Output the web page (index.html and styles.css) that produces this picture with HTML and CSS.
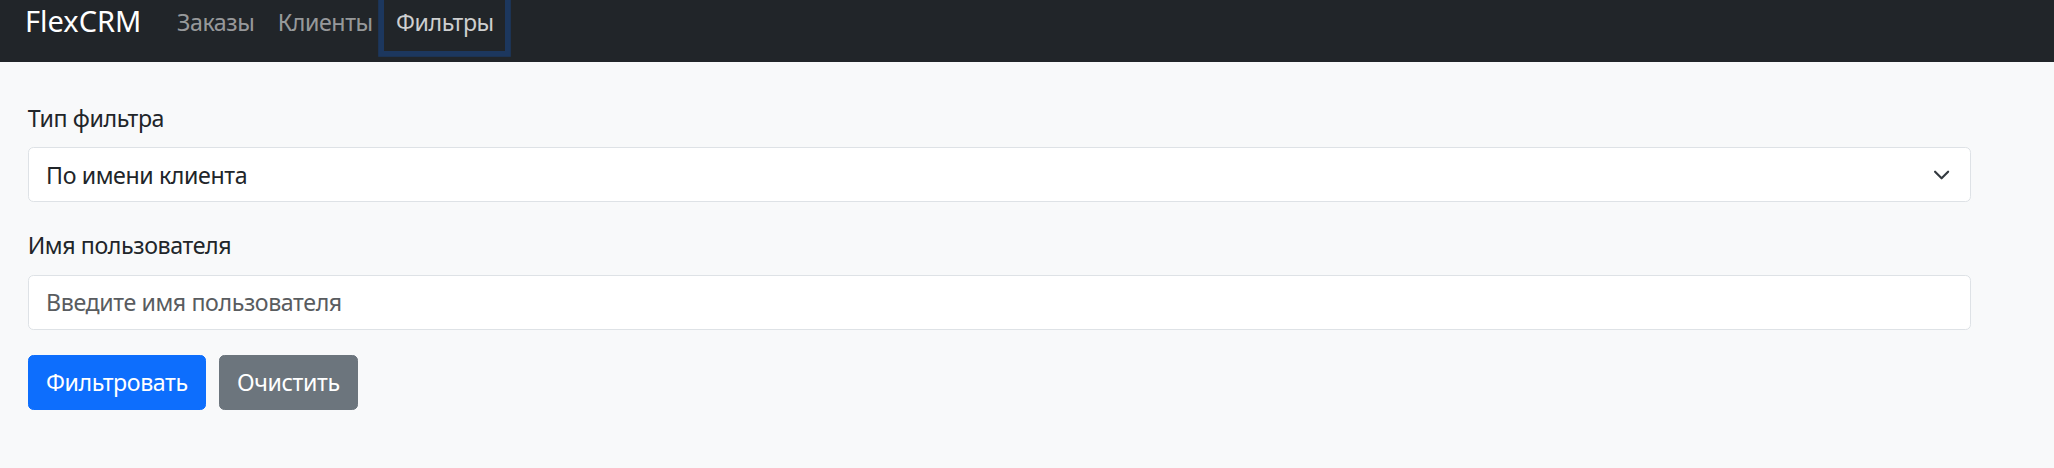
FILE: index.html
```html
<!DOCTYPE html>
<html lang="ru">
<head>
<meta charset="utf-8">
<title>FlexCRM — Фильтры</title>
<link rel="stylesheet" href="styles.css">
</head>
<body>
<nav class="navbar">
  <a class="brand" href="#">FlexCRM</a>
  <ul class="nav">
    <li><a class="nav-link" href="#">Заказы</a></li>
    <li><a class="nav-link" href="#">Клиенты</a></li>
    <li><a class="nav-link active" href="#">Фильтры</a></li>
  </ul>
</nav>
<main class="container">
  <form class="filter-form">
    <div class="field field-type">
      <label class="field-label" for="filter-type">Тип фильтра</label>
      <div class="select-wrap">
        <select id="filter-type" class="control select">
          <option>По имени клиента</option>
        </select>
        <svg class="chevron" viewBox="0 0 16 16" width="23.2" height="17.4" aria-hidden="true">
          <path d="m2 5 6 6 6-6" fill="none" stroke="#343a40" stroke-width="2" stroke-linecap="round" stroke-linejoin="round"/>
        </svg>
      </div>
    </div>
    <div class="field field-user">
      <label class="field-label" for="user-name">Имя пользователя</label>
      <input id="user-name" class="control" type="text" placeholder="Введите имя пользователя">
    </div>
    <div class="actions">
      <button type="button" class="btn btn-primary">Фильтровать</button>
      <button type="button" class="btn btn-secondary">Очистить</button>
    </div>
  </form>
</main>
</body>
</html>
```
FILE: styles.css
```css
* { box-sizing: border-box; }

html, body {
  margin: 0;
  padding: 0;
}

body {
  background: #f8f9fa;
  color: #212529;
  font-family: "Noto Sans", "Open Sans", sans-serif;
  font-size: 23.2px;
  line-height: 34.8px;
  letter-spacing: -0.4px;
  height: 468px;
  overflow: hidden;
}

/* ---------- navbar ---------- */
.navbar {
  display: flex;
  align-items: flex-start;
  height: 62px;
  background: #212529;
  padding-left: 25px;
}

.brand {
  display: block;
  color: #fff;
  text-decoration: none;
  font-size: 29px;
  line-height: 43.5px;
  letter-spacing: 0;
  margin-top: -1px;
  margin-right: 24px;
}

.nav {
  display: flex;
  list-style: none;
  margin: -7px 0 0 0;
  padding: 0;
}

.nav-link {
  display: block;
  padding: 11.6px 11.6px;
  color: rgba(255, 255, 255, 0.55);
  text-decoration: none;
}

.nav-link.active {
  color: rgba(255, 255, 255, 0.78);
  box-shadow: 0 0 0 5.8px #1c375e;
}

/* ---------- form ---------- */
.container {
  padding: 39px 83.3px 0 27.7px;
}

.field-label {
  display: block;
  margin-bottom: 11.7px;
}

.field-type { margin-bottom: 26px; }
.field-user { margin-bottom: 25px; }

.select-wrap {
  position: relative;
}

.control {
  display: block;
  width: 100%;
  height: 55px;
  margin: 0;
  padding: 0 17.4px;
  font: inherit;
  letter-spacing: inherit;
  color: #212529;
  background: #fff;
  border: 1.45px solid #dee2e6;
  border-radius: 5.4px;
  outline: none;
}

.control::placeholder {
  color: #595c5f;
  opacity: 1;
}

.select {
  appearance: none;
  -webkit-appearance: none;
  padding-right: 58px;
}

.chevron {
  position: absolute;
  right: 17.4px;
  top: 50%;
  transform: translateY(-50%);
  pointer-events: none;
}

.actions {
  display: flex;
  gap: 12.6px;
}

.btn {
  height: 55.5px;
  padding: 0 17.4px;
  font: inherit;
  letter-spacing: inherit;
  color: #fff;
  border: 1.45px solid transparent;
  border-radius: 5.4px;
  cursor: pointer;
}

.btn-primary {
  background: #0d6efd;
  border-color: #0d6efd;
}

.btn-secondary {
  background: #6c757d;
  border-color: #6c757d;
}
```
